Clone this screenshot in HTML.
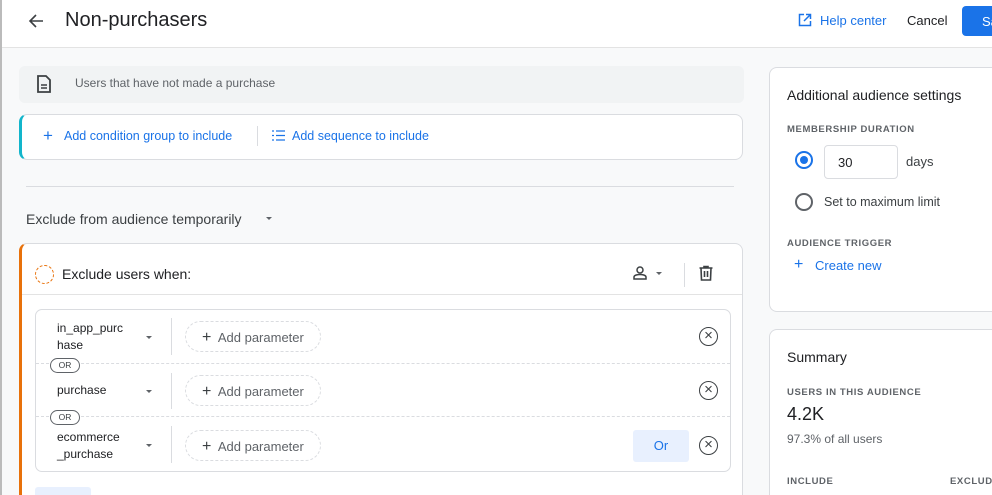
<!DOCTYPE html><html style="width:992px;height:495px;overflow:hidden"><head><style>
*{box-sizing:border-box;margin:0;padding:0}
body{width:992px;height:495px;overflow:hidden;background:#f8f9fa;font-family:"Liberation Sans",sans-serif;color:#3c4043;position:relative}
.abs{position:absolute}
.blue{color:#1a73e8}
.card{position:absolute;background:#fff;border:1px solid #dadce0;border-radius:8px}
.t13{font-size:13px}
.cap{font-size:9.5px;letter-spacing:.6px;color:#5f6368;font-weight:bold}
.chip{position:absolute;left:185px;width:136px;height:31px;border:1px dashed #dadce0;border-radius:16px;font-size:13px;color:#5f6368;padding:7px 0 0 16px}
.or{position:absolute;left:50px;width:30px;height:15px;border:1px solid #5f6368;border-radius:8px;font-size:8.5px;text-align:center;line-height:13px;background:#fff;color:#3c4043}
.x{position:absolute;left:699px;width:19px;height:19px;border:1.6px solid #3c4043;border-radius:50%;font-size:15px;line-height:15px;text-align:center;color:#3c4043}
.caret{position:absolute;width:0;height:0;border-left:3.5px solid transparent;border-right:3.5px solid transparent;border-top:3.5px solid #5f6368}
</style></head><body>
<div class="abs" style="left:0;top:0;width:992px;height:48px;background:#fff;border-bottom:1px solid #e3e3e3"></div>
<div class="abs" style="left:0;top:0;width:2px;height:495px;background:#bbb"></div>
<svg class="abs" style="left:26px;top:11px" width="20" height="20" viewBox="0 0 20 20"><path d="M17 10H4M10 4L4 10L10 16" stroke="#3c4043" stroke-width="1.6" fill="none"/></svg>
<div class="abs" style="left:65px;top:9px;font-size:20px;color:#202124">Non-purchasers</div>
<svg class="abs" style="left:798px;top:13px" width="14" height="14" viewBox="0 0 14 14"><path d="M6 1.5H1.5V12.5H12.5V8M8 1.5H12.5V6M12.5 1.5L6 8" stroke="#1a73e8" stroke-width="1.5" fill="none"/></svg>
<div class="abs blue t13" style="left:820px;top:13px">Help center</div>
<div class="abs t13" style="left:907px;top:13px;color:#202124">Cancel</div>
<div class="abs" style="left:962px;top:6px;width:30px;height:30px;background:#1a73e8;border-radius:4px 0 0 4px;color:#fff;font-size:13px;padding:8px 0 0 20px;overflow:hidden;white-space:nowrap">Sa</div>

<div class="abs" style="left:19px;top:66px;width:725px;height:37px;background:#f1f3f4;border-radius:6px"></div>
<svg class="abs" style="left:36px;top:75px" width="16" height="18" viewBox="0 0 16 18"><path d="M2 1H10L14 5V17H2Z" stroke="#3c4043" stroke-width="1.8" fill="none"/><path d="M5 10H11M5 13H11" stroke="#3c4043" stroke-width="1.5"/></svg>
<div class="abs" style="left:75px;top:76px;font-size:12px;color:#5f6368">Users that have not made a purchase</div>

<div class="card" style="left:19px;top:114px;width:724px;height:46px;border-left:3px solid #12b5cb"></div>
<div class="abs blue" style="left:43px;top:126px;font-size:17px">+</div>
<div class="abs blue" style="left:64px;top:129px;font-size:12.5px">Add condition group to include</div>
<div class="abs" style="left:257px;top:126px;width:1px;height:20px;background:#dadce0"></div>
<svg class="abs" style="left:272px;top:130px" width="13" height="11" viewBox="0 0 13 11"><path d="M0 1H2M0 5.5H2M0 10H2M4 1H13M4 5.5H13M4 10H13" stroke="#1a73e8" stroke-width="1.3"/></svg>
<div class="abs blue" style="left:292px;top:129px;font-size:12.5px">Add sequence to include</div>

<div class="abs" style="left:26px;top:186px;width:708px;height:1px;background:#dadce0"></div>
<div class="abs" style="left:26px;top:211px;font-size:14px;color:#3c4043">Exclude from audience temporarily</div>
<div class="caret" style="left:266px;top:217px"></div>

<div class="card" style="left:19px;top:243px;width:724px;height:252px;border-left:3px solid #e8710a;border-bottom:none;border-radius:8px 8px 0 0"></div>
<div class="abs" style="left:35px;top:265px;width:19px;height:19px;border:1px dashed #e8710a;border-radius:50%"></div>
<div class="abs" style="left:62px;top:266px;font-size:14px;color:#202124">Exclude users when:</div>
<svg class="abs" style="left:632px;top:265px" width="16" height="16" viewBox="0 0 16 16"><circle cx="8" cy="5" r="3" stroke="#3c4043" stroke-width="1.5" fill="none"/><path d="M2 14V12C2 10 6 9.5 8 9.5S14 10 14 12V14Z" stroke="#3c4043" stroke-width="1.5" fill="none"/></svg>
<div class="caret" style="left:656px;top:272px"></div>
<div class="abs" style="left:684px;top:263px;width:1px;height:24px;background:#dadce0"></div>
<svg class="abs" style="left:698px;top:265px" width="16" height="16" viewBox="0 0 16 16"><path d="M1.5 3H14.5M6 3V1.5H10V3M3 3L3.5 15H12.5L13 3M6.5 6V12M9.5 6V12" stroke="#3c4043" stroke-width="1.6" fill="none"/></svg>
<div class="abs" style="left:22px;top:294px;width:720px;height:1px;background:#e3e3e3"></div>

<div class="abs" style="left:35px;top:309px;width:696px;height:163px;border:1px solid #dadce0;border-radius:7px;background:#fff"></div>
<div class="abs" style="left:36px;top:363px;width:694px;border-top:1px dashed #dadce0"></div>
<div class="abs" style="left:36px;top:416px;width:694px;border-top:1px dashed #dadce0"></div>
<div class="abs" style="left:171px;top:318px;width:1px;height:37px;background:#dadce0"></div>
<div class="abs" style="left:171px;top:373px;width:1px;height:36px;background:#dadce0"></div>
<div class="abs" style="left:171px;top:426px;width:1px;height:37px;background:#dadce0"></div>
<div class="abs" style="left:57px;top:320px;font-size:12px;line-height:17px;color:#202124">in_app_purc<br>hase</div>
<div class="abs" style="left:57px;top:383px;font-size:12px;color:#202124">purchase</div>
<div class="abs" style="left:57px;top:429px;font-size:12px;line-height:17px;color:#202124">ecommerce<br>_purchase</div>
<div class="caret" style="left:146px;top:336px"></div>
<div class="caret" style="left:146px;top:390px"></div>
<div class="caret" style="left:146px;top:444px"></div>
<div class="chip" style="top:321px"><span style="font-size:16px;color:#3c4043">+</span>&nbsp; Add parameter</div>
<div class="chip" style="top:375px"><span style="font-size:16px;color:#3c4043">+</span>&nbsp; Add parameter</div>
<div class="chip" style="top:430px"><span style="font-size:16px;color:#3c4043">+</span>&nbsp; Add parameter</div>
<div class="or" style="top:358px">OR</div>
<div class="or" style="top:410px">OR</div>
<div class="x" style="top:327px">×</div>
<div class="x" style="top:381px">×</div>
<div class="x" style="top:436px">×</div>
<div class="abs" style="left:633px;top:430px;width:56px;height:32px;background:#e8f0fe;border-radius:3px;color:#1a73e8;font-size:13px;text-align:center;line-height:32px">Or</div>
<div class="abs" style="left:35px;top:487px;width:56px;height:8px;background:#e8f0fe;border-radius:3px 3px 0 0"></div>

<div class="card" style="left:769px;top:67px;width:223px;height:245px;border-right:none;border-radius:8px 0 0 8px"></div>
<div class="abs" style="left:787px;top:87px;font-size:14px;color:#202124">Additional audience settings</div>
<div class="abs cap" style="left:787px;top:124px">MEMBERSHIP DURATION</div>
<div class="abs" style="left:795px;top:151px;width:18px;height:18px;border:2px solid #1a73e8;border-radius:50%"></div>
<div class="abs" style="left:800px;top:156px;width:8px;height:8px;background:#1a73e8;border-radius:50%"></div>
<div class="abs" style="left:824px;top:145px;width:74px;height:34px;border:1px solid #dadce0;border-radius:4px;font-size:13px;padding:9px 0 0 13px;color:#202124">30</div>
<div class="abs t13" style="left:906px;top:154px">days</div>
<div class="abs" style="left:795px;top:193px;width:18px;height:18px;border:2px solid #5f6368;border-radius:50%"></div>
<div class="abs" style="left:824px;top:195px;font-size:12.5px">Set to maximum limit</div>
<div class="abs cap" style="left:787px;top:238px">AUDIENCE TRIGGER</div>
<div class="abs blue" style="left:794px;top:256px;font-size:16px">+</div>
<div class="abs blue t13" style="left:815px;top:258px">Create new</div>

<div class="card" style="left:769px;top:329px;width:223px;height:166px;border-right:none;border-bottom:none;border-radius:8px 0 0 0"></div>
<div class="abs" style="left:787px;top:349px;font-size:14px;color:#202124">Summary</div>
<div class="abs cap" style="left:787px;top:387px">USERS IN THIS AUDIENCE</div>
<div class="abs" style="left:787px;top:404px;font-size:18px;color:#202124">4.2K</div>
<div class="abs" style="left:787px;top:432px;font-size:12px;color:#5f6368">97.3% of all users</div>
<div class="abs cap" style="left:787px;top:476px">INCLUDE</div>
<div class="abs cap" style="left:950px;top:476px;width:42px;overflow:hidden;white-space:nowrap">EXCLUDE</div>
</body></html>
